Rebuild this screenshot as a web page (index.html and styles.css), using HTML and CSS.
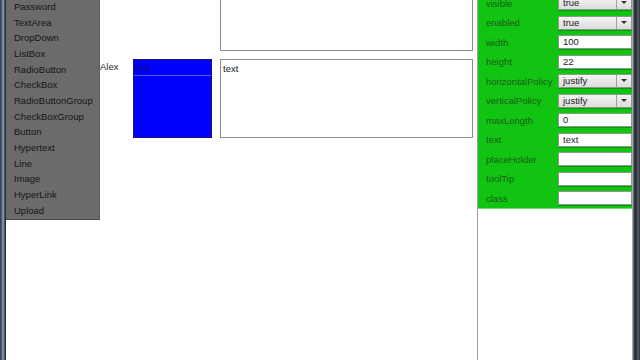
FILE: index.html
```html
<!DOCTYPE html>
<html>
<head>
<meta charset="utf-8">
<link rel="stylesheet" href="styles.css">
</head>
<body>
<div class="frame-left"></div>
<div class="workspace">
  <div class="canvas">
    <div class="slot"></div>
    <div class="slot"></div>
    <div class="slot"></div>
    <div class="textarea top"></div>
    <div class="label">Alex</div>
    <div class="listbox"><div class="listbox-item">text</div></div>
    <div class="slot"></div>
    <div class="textarea"><span>text</span></div>
  </div>
  <ul class="menu">
    <li>Password</li>
    <li>TextArea</li>
    <li>DropDown</li>
    <li>ListBox</li>
    <li>RadioButton</li>
    <li>CheckBox</li>
    <li>RadioButtonGroup</li>
    <li>CheckBoxGroup</li>
    <li>Button</li>
    <li>Hypertext</li>
    <li>Line</li>
    <li>Image</li>
    <li>HyperLink</li>
    <li>Upload</li>
  </ul>
</div>
<div class="panel">
  <div class="props">
    <div class="row"><span class="name">visible</span><div class="select"><span class="val">true</span><span class="arrow"></span></div></div>
    <div class="row"><span class="name">enabled</span><div class="select"><span class="val">true</span><span class="arrow"></span></div></div>
    <div class="row"><span class="name">width</span><div class="input">100</div></div>
    <div class="row"><span class="name">height</span><div class="input">22</div></div>
    <div class="row"><span class="name">horizontalPolicy</span><div class="select"><span class="val">justify</span><span class="arrow"></span></div></div>
    <div class="row"><span class="name">verticalPolicy</span><div class="select"><span class="val">justify</span><span class="arrow"></span></div></div>
    <div class="row"><span class="name">maxLength</span><div class="input">0</div></div>
    <div class="row"><span class="name">text</span><div class="input">text</div></div>
    <div class="row"><span class="name">placeHolder</span><div class="input"></div></div>
    <div class="row"><span class="name">toolTip</span><div class="input"></div></div>
    <div class="row"><span class="name">class</span><div class="input"></div></div>
  </div>
</div>
<div class="frame-right"></div>
</body>
</html>
```

FILE: styles.css
```css
html, body {
  margin: 0;
  padding: 0;
}
body {
  width: 640px;
  height: 360px;
  overflow: hidden;
  display: flex;
  font-family: "Liberation Sans", Arial, sans-serif;
  font-size: 9.5px;
  background: #fff;
}
.frame-left {
  width: 6px;
  flex: none;
  background: linear-gradient(to right, #2f3b4c 0, #55657c 2px, #9aa8bb 3px, #6a7a90 4px, #26324a 5px, #1d2738 6px);
}
.frame-right {
  width: 7px;
  flex: none;
  background: linear-gradient(to right, #8f959c 0, #3b3f45 1px, #25282d 3px, #5a6170 5px, #2a2e36 7px);
}
.workspace {
  flex: 1;
  position: relative;
  background: #fff;
  overflow: hidden;
}
.canvas {
  display: grid;
  grid-template-columns: 33px 79px 8px 253px;
  grid-template-rows: 81px 79px;
  row-gap: 8px;
  margin-top: -30px;
  padding-left: 94px;
}
.textarea {
  border: 1px solid #8c8c8c;
  background: #fff;
  color: #1a1a1a;
  padding: 2px 2px;
  box-sizing: border-box;
}
.textarea span {
  display: block;
  margin-top: 1px;
}
.label {
  color: #2a2a2a;
  padding-top: 2px;
}
.listbox {
  background: #0000ff;
  border: 1px solid #16167a;
  box-sizing: border-box;
}
.listbox-item {
  height: 15px;
  border-bottom: 1px solid #5a5aff;
  color: #0c0c70;
  padding-left: 1px;
  line-height: 15px;
}
.menu {
  position: absolute;
  left: 0;
  top: -1px;
  width: 94px;
  height: 221px;
  margin: 0;
  padding: 0;
  list-style: none;
  background: #6b6b6b;
  border-right: 1px solid #5c5c5c;
  border-bottom: 1px solid #4a4a4a;
  box-sizing: border-box;
}
.menu li {
  height: 15.67px;
  line-height: 15.67px;
  padding-left: 8px;
  color: #161616;
}
.panel {
  width: 156px;
  flex: none;
  border-left: 1px solid #a0a0a0;
  border-right: 1px solid #a8a8a8;
  box-sizing: border-box;
  background: #fff;
}
.props {
  margin-top: -6.5px;
  background: #12c412;
  border-bottom: 1px solid #6edc6e;
}
.row {
  height: 19.5px;
  display: flex;
  align-items: center;
}
.name {
  width: 80px;
  flex: none;
  padding-left: 8px;
  box-sizing: border-box;
  color: #1b5a1b;
  white-space: nowrap;
}
.input, .select {
  flex: 1;
  height: 14px;
  box-sizing: border-box;
  border: 1px solid #8a9a8a;
  box-shadow: 0 1px 0 #0a960a;
  background: #fff;
  color: #1c1c1c;
  line-height: 12px;
  padding-left: 4px;
}
.select {
  display: flex;
  padding-left: 0;
  background: linear-gradient(#f4f4f4, #dcdcdc);
}
.select .val {
  flex: 1;
  padding-left: 4px;
}
.select .arrow {
  width: 14px;
  border-left: 1px solid #a0a0a0;
  position: relative;
}
.select .arrow::after {
  content: "";
  position: absolute;
  left: 4px;
  top: 4px;
  border-left: 3px solid transparent;
  border-right: 3px solid transparent;
  border-top: 3px solid #333;
}
```
